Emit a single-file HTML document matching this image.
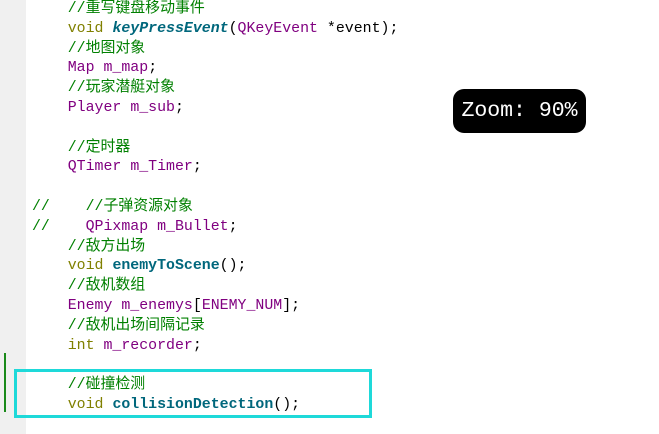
<!DOCTYPE html>
<html><head><meta charset="utf-8"><style>
html,body{margin:0;padding:0;width:659px;height:434px;overflow:hidden;background:#fff;}
.gut{position:absolute;left:0;top:0;width:26px;height:434px;background:#f0f0f0;}
.code{position:absolute;left:32px;top:0px;font-family:"Liberation Mono","Noto Sans CJK SC",monospace;font-size:14.9px;line-height:19.8px;white-space:pre;color:#000;}
.c{color:#008000}.k{color:#808000}.t{color:#800080}.f{color:#00677c;font-weight:bold}.i{font-style:italic}
.zoom{position:absolute;left:453px;top:89px;width:133px;height:44px;background:#000;border-radius:11px;color:#fff;font-family:"Liberation Mono",monospace;font-size:21.5px;line-height:44px;text-align:center;}
.box{position:absolute;left:14px;top:369px;width:352px;height:43px;border:3px solid #1ed9d9;}
.mark{position:absolute;left:4px;top:353px;width:2px;height:59px;background:#1a8a1a;}
</style></head><body>
<div class="gut"></div>
<div class="mark"></div>
<div class="code"><span class="c">    //重写键盘移动事件</span>
    <span class="k">void</span> <span class="f i">keyPressEvent</span>(<span class="t">QKeyEvent</span> *event);
<span class="c">    //地图对象</span>
    <span class="t">Map</span> <span class="t">m_map</span>;
<span class="c">    //玩家潜艇对象</span>
    <span class="t">Player</span> <span class="t">m_sub</span>;

<span class="c">    //定时器</span>
    <span class="t">QTimer</span> <span class="t">m_Timer</span>;

<span class="c">//    //子弹资源对象</span>
<span class="c">//</span>    <span class="t">QPixmap m_Bullet</span>;
<span class="c">    //敌方出场</span>
    <span class="k">void</span> <span class="f">enemyToScene</span>();
<span class="c">    //敌机数组</span>
    <span class="t">Enemy</span> <span class="t">m_enemys</span>[<span class="t">ENEMY_NUM</span>];
<span class="c">    //敌机出场间隔记录</span>
    <span class="k">int</span> <span class="t">m_recorder</span>;

<span class="c">    //碰撞检测</span>
    <span class="k">void</span> <span class="f">collisionDetection</span>();</div>
<div class="zoom">Zoom: 90%</div>
<div class="box"></div>
</body></html>
